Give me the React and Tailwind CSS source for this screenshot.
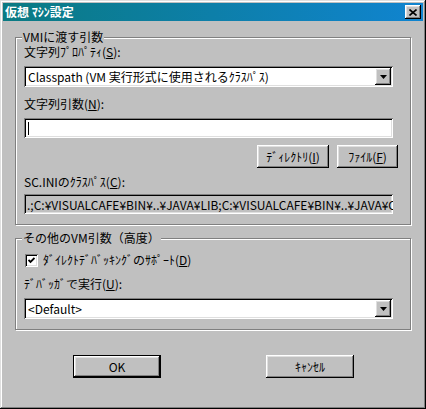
import React from "react";

const sunken =
  "shadow-[inset_1px_1px_0_#808080,inset_-1px_-1px_0_#fff,inset_2px_2px_0_#000,inset_-2px_-2px_0_#dfdfdf]";
const raised =
  "shadow-[inset_-1px_-1px_0_#000,inset_1px_1px_0_#fff,inset_-2px_-2px_0_#808080,inset_2px_2px_0_#dfdfdf]";

function Arrow() {
  return (
    <svg width="7" height="4" viewBox="0 0 7 4">
      <polygon points="0,0 7,0 3.5,4" fill="#000" />
    </svg>
  );
}

function Combo({ children }) {
  return (
    <div className={`flex items-center bg-white h-[21px] w-[369px] ${sunken}`}>
      <span className="flex-1 min-w-0 pl-[4px] leading-[17px] whitespace-nowrap overflow-hidden">
        {children}
      </span>
      <div
        className={`w-[16px] h-[17px] mr-[2px] bg-[#c0c0c0] flex items-center justify-center ${raised}`}
      >
        <Arrow />
      </div>
    </div>
  );
}

function Button({ children, className = "", isDefault = false }) {
  if (isDefault) {
    return (
      <div className={`h-[23px] border border-black bg-[#c0c0c0] ${className}`}>
        <div className={`h-full flex items-center justify-center ${raised}`}>
          {children}
        </div>
      </div>
    );
  }
  return (
    <div
      className={`h-[23px] bg-[#c0c0c0] flex items-center justify-center ${raised} ${className}`}
    >
      {children}
    </div>
  );
}

function Group({ label, className = "", children }) {
  return (
    <div
      className={`relative border border-[#808080] shadow-[1px_1px_0_#fff,inset_1px_1px_0_#fff] ${className}`}
    >
      <span className="absolute -top-[8px] left-[6px] px-[1px] bg-[#c0c0c0] leading-[14px] whitespace-nowrap">
        {label}
      </span>
      {children}
    </div>
  );
}

export default function App() {
  return (
    <div className="w-[426px] h-[409px] bg-[#c0c0c0] p-[3px] text-[12px] text-black font-['Noto_Sans_CJK_JP',sans-serif] shadow-[inset_-1px_-1px_0_#000,inset_1px_1px_0_#dfdfdf,inset_-2px_-2px_0_#808080,inset_2px_2px_0_#fff]">
      {/* title bar */}
      <div className="h-[18px] flex items-center justify-between pl-[2px] pr-[2px] bg-[linear-gradient(to_right,#0a7a82,#1084d0)]">
        <span className="text-white font-bold leading-[14px]">仮想 ﾏｼﾝ設定</span>
        <div
          className={`w-[16px] h-[14px] bg-[#c0c0c0] flex items-center justify-center ${raised}`}
        >
          <svg width="8" height="7" viewBox="0 0 8 7">
            <path d="M0.5 0.5 L7.5 6.5 M7.5 0.5 L0.5 6.5" stroke="#000" strokeWidth="1.6" />
          </svg>
        </div>
      </div>

      <div className="px-[12px]">
        <Group label="VMIに渡す引数" className="mt-[16px] h-[188px]">
          <div className="pl-[8px]">
            <div className="mt-[7px] leading-[14px]">
              文字列ﾌﾟﾛﾊﾟﾃｨ(<u>S</u>):
            </div>
            <div className="mt-[7px]">
              <Combo>Classpath (VM 実行形式に使用されるｸﾗｽﾊﾟｽ)</Combo>
            </div>
            <div className="mt-[10px] leading-[14px]">
              文字列引数(<u>N</u>):
            </div>
            <div className={`mt-[7px] h-[20px] w-[369px] bg-white flex items-center pl-[4px] ${sunken}`}>
              <div className="w-[1px] h-[13px] bg-black" />
            </div>
            <div className="mt-[7px] flex">
              <Button className="ml-[233px] w-[72px]">
                ﾃﾞｨﾚｸﾄﾘ(<u>I</u>)
              </Button>
              <Button className="ml-[8px] w-[61px]">
                ﾌｧｲﾙ(<u>F</u>)
              </Button>
            </div>
            <div className="mt-[7px] leading-[14px]">
              SC.INIのｸﾗｽﾊﾟｽ(<u>C</u>):
            </div>
            <div
              className={`mt-[5px] h-[20px] w-[369px] flex items-center pl-[3px] pr-[2px] overflow-hidden ${sunken}`}
            >
              <span className="whitespace-nowrap leading-[17px]">
                .;C:¥VISUALCAFE¥BIN¥..¥JAVA¥LIB;C:¥VISUALCAFE¥BIN¥..¥JAVA¥CLASSES
              </span>
            </div>
          </div>
        </Group>

        <Group label="その他のVM引数（高度）" className="mt-[13px] h-[92px]">
          <div className="pl-[8px]">
            <div className="mt-[14px] flex items-center">
              <div
                className={`ml-[1px] w-[13px] h-[13px] bg-white flex items-center justify-center ${sunken}`}
              >
                <svg width="7" height="7" viewBox="0 0 7 7">
                  <polyline points="0.5,3 2.5,5 6.5,1" fill="none" stroke="#000" strokeWidth="1.8" />
                </svg>
              </div>
              <span className="ml-[5px] leading-[14px]">
                ﾀﾞｲﾚｸﾄﾃﾞﾊﾞｯｷﾝｸﾞのｻﾎﾟｰﾄ(<u>D</u>)
              </span>
            </div>
            <div className="mt-[10px] leading-[14px]">
              ﾃﾞﾊﾞｯｶﾞで実行(<u>U</u>):
            </div>
            <div className="mt-[7px]">
              <Combo>&lt;Default&gt;</Combo>
            </div>
          </div>
        </Group>
      </div>

      <div className="mt-[25px] flex">
        <Button isDefault className="ml-[70px] w-[88px]">
          OK
        </Button>
        <Button className="ml-[105px] w-[88px]">ｷｬﾝｾﾙ</Button>
      </div>
    </div>
  );
}
